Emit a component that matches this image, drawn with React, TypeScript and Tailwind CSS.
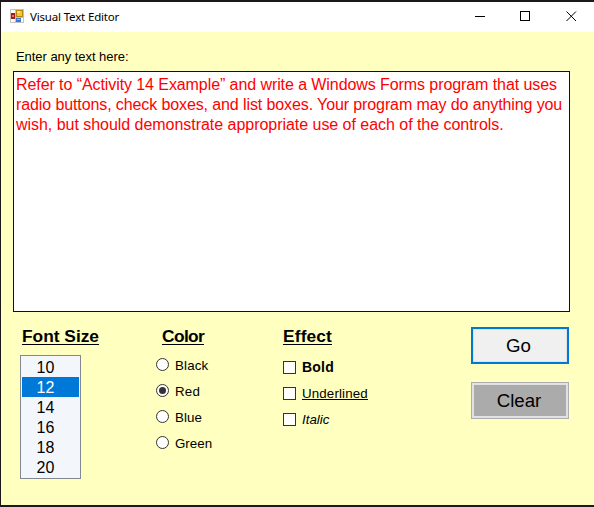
import React, { useState } from "react";

const sizes = ["10", "12", "14", "16", "18", "20"];

const colors = [
  { name: "Black", cls: "tracking-[0.15px]" },
  { name: "Red", cls: "tracking-[0.2px]" },
  { name: "Blue", cls: "tracking-[0.1px]" },
  { name: "Green", cls: "tracking-[0px]" },
];

const effects = [
  { name: "Bold", cls: "font-bold text-[14px] tracking-[0.2px]" },
  { name: "Underlined", cls: "border-b border-black text-[13.33px] tracking-[0.13px]" },
  { name: "Italic", cls: "italic text-[13.33px] tracking-[0px]" },
];

const lines = [
  { text: "Refer to “Activity 14 Example” and write a Windows Forms program that uses", cls: "tracking-[-0.08px]" },
  { text: "radio buttons, check boxes, and list boxes. Your program may do anything you", cls: "tracking-[-0.105px]" },
  { text: "wish, but should demonstrate appropriate use of each of the controls.", cls: "tracking-[-0.035px]" },
];

function FormIcon() {
  return (
    <svg className="mb-[2px]" width="14" height="14" viewBox="0 0 14 14" shapeRendering="crispEdges">
      <rect width="14" height="14" fill="#c2c2c2" />
      <rect x="1" y="1" width="4" height="3" fill="#fff" />
      <rect x="1" y="10" width="4" height="3" fill="#fff" />
      <rect x="6" y="9" width="7" height="4" fill="#fff" />
      <rect x="1" y="4" width="4" height="6" fill="#a31a10" />
      <rect x="2" y="6" width="2" height="2" fill="#e8735f" />
      <rect x="6" y="1" width="7" height="7" fill="#b8860b" />
      <rect x="7" y="2" width="5" height="5" fill="#f8c62c" />
      <rect x="7" y="2" width="3" height="2" fill="#ffe68a" />
      <rect x="6" y="9" width="5" height="4" fill="#3a78d8" />
      <rect x="7" y="10" width="3" height="1" fill="#8fbcf8" />
    </svg>
  );
}

function Heading({ children, className }: { children: React.ReactNode; className: string }) {
  return (
    <h2 className={`h-[18px] border-b border-black text-[17.33px] font-bold leading-[18px] whitespace-nowrap ${className}`}>
      {children}
    </h2>
  );
}

export default function App() {
  const [size, setSize] = useState("12");
  const [color, setColor] = useState("Red");

  return (
    <div className="flex h-[507px] w-[594px] flex-col overflow-hidden border-y-2 border-l border-[#1c181b] bg-[#ffffc0] font-['Liberation_Sans',Arial,sans-serif] text-black">
      <header className="flex h-[30px] shrink-0 items-center bg-white pl-[9px]">
        <FormIcon />
        <span className="ml-[6px] font-['Noto_Sans','Open_Sans',sans-serif] text-[11.5px] leading-[16px] tracking-[-0.17px] whitespace-nowrap">
          Visual Text Editor
        </span>
        <svg className="mb-[2px] ml-auto mr-[17px]" width="102" height="12" viewBox="0 0 102 12" fill="none" stroke="#000">
          <path d="M0 6.5h10M45.5 1.5h9v9h-9z" shapeRendering="crispEdges" />
          <path d="M91.5 1.5l9.5 9.5M101 1.5L91.5 11" />
        </svg>
      </header>

      <main className="flex flex-col pl-3">
        <label className="ml-[3px] mt-[17px] h-[22px] text-[13px] leading-4 tracking-[-0.05px] whitespace-nowrap">
          Enter any text here:
        </label>
        <div className="h-[241px] w-[557px] border border-[#101010] bg-white pl-[2px] pt-[3px] text-base leading-5 text-[#ff0000]">
          {lines.map((l) => (
            <p key={l.text} className={`w-max whitespace-nowrap ${l.cls}`}>
              {l.text}
            </p>
          ))}
        </div>

        <div className="mt-[15px] flex">
          <section className="ml-[7px] w-[135px]">
            <Heading className="ml-[2px] w-[77px]">Font Size</Heading>
            <ul className="mt-[10px] h-[124px] w-[61px] border border-[#828790] bg-[#f3f7fc] p-px text-base">
              {sizes.map((s) => (
                <li
                  key={s}
                  onClick={() => setSize(s)}
                  className={`h-5 pl-[14.5px] pt-px leading-5 ${s === size ? "bg-[#0078d7] text-white" : ""}`}
                >
                  {s}
                </li>
              ))}
            </ul>
          </section>

          <section className="w-[128px]">
            <Heading className="ml-[7px] w-[42px] tracking-[-0.6px]">Color</Heading>
            <div className="ml-px mt-[7px] flex flex-col">
              {colors.map((c) => (
                <div key={c.name} onClick={() => setColor(c.name)} className="flex h-[26px] items-start pt-[6px]">
                  <span className="flex size-[13px] items-center justify-center rounded-full border border-[#333] bg-white">
                    {c.name === color && <span className="size-[7px] rounded-full bg-[#333]" />}
                  </span>
                  <span className={`ml-[6px] text-[13.33px] leading-4 ${c.cls}`}>{c.name}</span>
                </div>
              ))}
            </div>
          </section>

          <section className="w-[188px]">
            <Heading className="w-[49px] tracking-[0.15px]">Effect</Heading>
            <div className="mt-[10px] flex flex-col">
              {effects.map((e) => (
                <div key={e.name} className="flex h-[26px] items-start pt-[6px]">
                  <span className="size-[13px] border border-[#333] bg-white" />
                  <span className={`ml-[6px] mt-px leading-[11px] ${e.cls}`}>{e.name}</span>
                </div>
              ))}
            </div>
          </section>

          <section className="flex flex-col gap-[18px]">
            <button className="h-[37px] w-[98px] border-2 border-[#0078d7] bg-[#f0f0f0] pr-[3px] text-[18.67px] leading-5 shadow-[inset_0_0_0_1px_#e1e1e1]">
              Go
            </button>
            <button className="h-[37px] w-[98px] border border-[#adadad] bg-[#ababab] pr-[2px] text-[18.67px] leading-5 shadow-[inset_0_0_0_2px_#e1e1e1]">
              Clear
            </button>
          </section>
        </div>
      </main>
    </div>
  );
}
